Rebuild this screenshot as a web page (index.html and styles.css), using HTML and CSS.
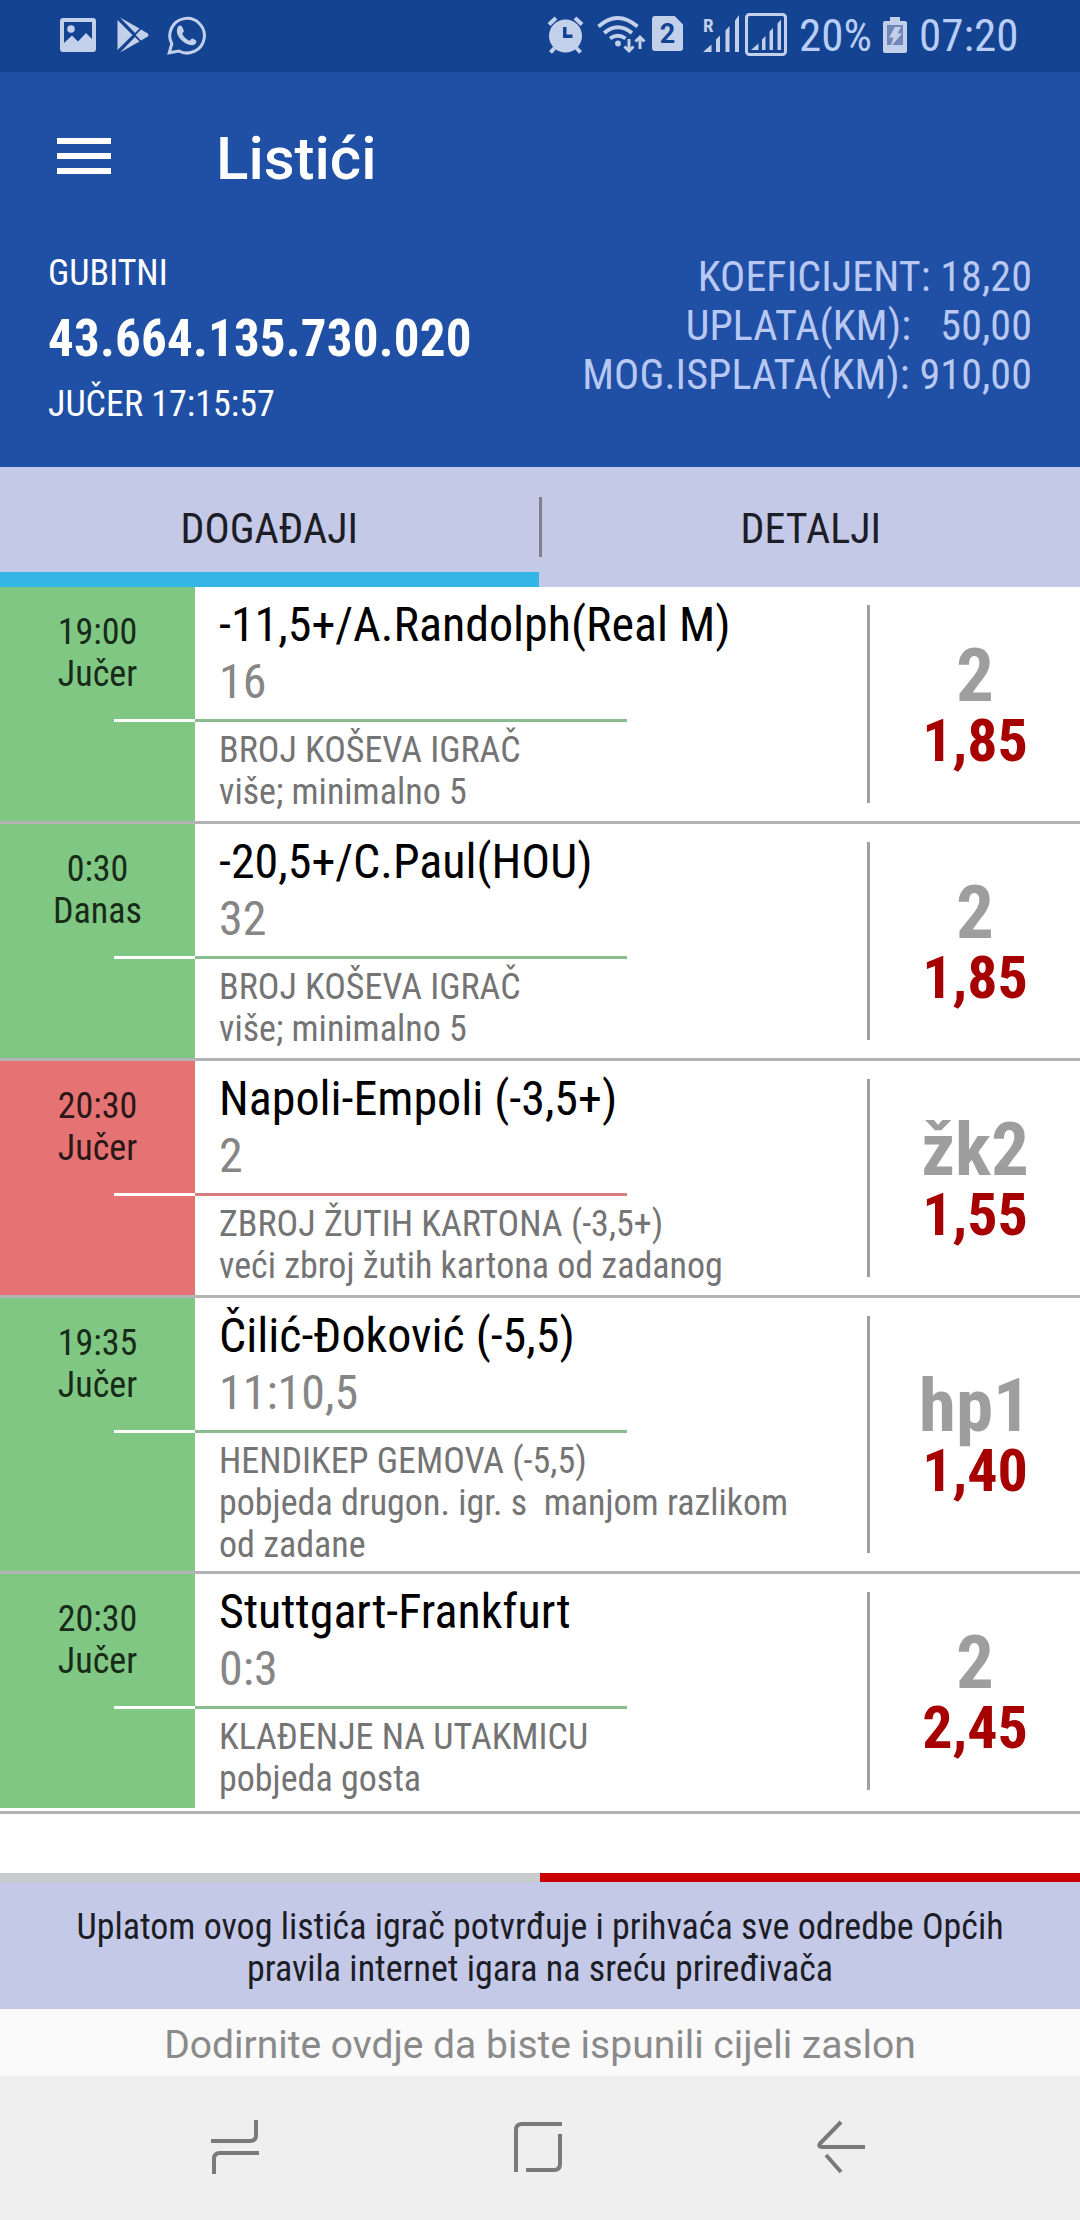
FILE: index.html
```html
<!DOCTYPE html>
<html lang="hr">
<head>
    <meta charset="UTF-8">
    <meta name="viewport" content="width=device-width, initial-scale=1.0">
    <title>Listići</title>
    <link rel="stylesheet" href="styles.css">
</head>
<body>
    <div class="status-bar">
        <svg class="icon-image" width="36" height="34" viewBox="0 0 36 34">
            <path fill-rule="evenodd" d="M3 0h30a3 3 0 0 1 3 3v28a3 3 0 0 1-3 3H3a3 3 0 0 1-3-3V3a3 3 0 0 1 3-3zM4 4v21l8-7.500 6 6 8-8.500 6 6V4z"/>
            <circle cx="11" cy="11" r="3.800"/>
        </svg>
        <svg class="icon-play" width="32" height="36" viewBox="0 0 32 36">
            <path d="M.5 3v30L15.500 18zM3 .5l19.500 11-4.500 4.500zM3 35.500l19.500-11-4.500-4.500zM24 12.500l6.500 3.700q2 1.800 0 3.600L24 23.500 18.700 18z"/>
        </svg>
        <svg class="icon-whatsapp" width="39" height="39" viewBox="0 0 39 39">
            <path class="line" stroke-width="3" d="M2.200 36.800l2.600-9A17.300 17.300 0 1 1 12 35z"/>
            <path d="M11 10.500c2-2 4-.5 4.500 1l1.300 3.300c.4 1.200-1.200 2-1.600 2.900 1.500 3.200 4 5.600 7.300 7 1-.4 1.800-2.400 3-2.200l3.300 1.700c1.200.6.6 3-.8 4-5 4-19.500-5.500-18-14.500q.3-2 1-3.200z"/>
        </svg>
        <div class="status-right">
            <svg class="icon-alarm" width="37" height="38" viewBox="0 0 37 38">
                <path fill-rule="evenodd" d="M18.500 3.500a16.500 16.500 0 1 1 0 33 16.500 16.500 0 0 1 0-33zM16 11v11h9.500v-3.500H19.500V11z"/>
                <path class="line" stroke-width="4" d="M2 8.500l7-6.500M28 2l7 6.500M7.500 32l-4 4.500M29.500 32l4 4.500"/>
            </svg>
            <svg class="icon-wifi" width="50" height="38" viewBox="0 0 50 38">
                <path class="line" stroke-width="3.800" d="M1.500 10.500Q20.500-6.500 40.500 10.500M7.200 17Q20.500 5.500 35 17M13 22.500q8-5.500 15.500 0"/>
                <circle cx="21" cy="27.500" r="2.900"/>
                <path class="line" stroke-width="3" d="M32 23v12M27.500 30.500l4.500 4.500 4.500-4.500M43 33V21M38.500 25.500l4.500-4.500 4.500 4.500"/>
            </svg>
            <div class="sim">2</div>
            <svg class="icon-signal" width="37" height="38" viewBox="0 0 37 38">
                <path d="M0 37l8.500-7.500V37zM13 37V24.500l4-4V37zM22.500 37V15.500l4-4.500v26zM32 37V5.500L36 0v37z"/>
                <text x="0" y="17">R</text>
            </svg>
            <svg class="icon-signal-box" width="42" height="43" viewBox="0 0 42 43">
                <rect class="line" stroke-width="3" x="1.500" y="1.500" width="39" height="40" rx="3"/>
                <path d="M6 37l7.500-6.500V37zM17 37V26.500l3.500-3.500v14zM24.500 37V18.500l3.500-3.500v22zM32.500 37V10.500L36 6.500V37z"/>
            </svg>
            <span class="battery-level">20%</span>
            <svg class="icon-battery" width="24" height="37" viewBox="0 0 24 37">
                <path d="M7 0h10v4H22q2 0 2 2v28q0 2-2 2H2q-2 0-2-2V6q0-2 2-2H7z"/>
                <path class="battery-hole" d="M4 8h16v20H4z"/>
                <path d="M12 10h6l-3.500 6.500H19L7.500 30l3-9.500H6z"/>
            </svg>
            <span class="clock">07:20</span>
        </div>
    </div>

    <header>
        <div class="toolbar">
            <div class="menu-btn"><span></span><span></span><span></span></div>
            <h1>Listići</h1>
        </div>
        <div class="ticket">
            <div class="ticket-info">
                <div>GUBITNI</div>
                <div class="ticket-number">43.664.135.730.020</div>
                <div>JUČER 17:15:57</div>
            </div>
            <div class="ticket-totals">
                <div>KOEFICIJENT: 18,20</div>
                <div>UPLATA(KM): &nbsp; 50,00</div>
                <div>MOG.ISPLATA(KM): 910,00</div>
            </div>
        </div>
    </header>

    <nav class="tabs">
        <div class="tab active">DOGAĐAJI</div>
        <div class="tab-divider"></div>
        <div class="tab">DETALJI</div>
    </nav>

    <main>
        <div class="event won">
            <div class="event-time">19:00<br>Jučer</div>
            <div class="event-body">
                <div class="event-name">-11,5+/A.Randolph(Real M)</div>
                <div class="event-result">16</div>
                <div class="event-line"></div>
                <div class="event-desc">BROJ KOŠEVA IGRAČ<br>više; minimalno 5</div>
            </div>
            <div class="event-odds">
                <div class="pick">2</div>
                <div class="odd">1,85</div>
            </div>
        </div>
        <div class="event won">
            <div class="event-time">0:30<br>Danas</div>
            <div class="event-body">
                <div class="event-name">-20,5+/C.Paul(HOU)</div>
                <div class="event-result">32</div>
                <div class="event-line"></div>
                <div class="event-desc">BROJ KOŠEVA IGRAČ<br>više; minimalno 5</div>
            </div>
            <div class="event-odds">
                <div class="pick">2</div>
                <div class="odd">1,85</div>
            </div>
        </div>
        <div class="event lost">
            <div class="event-time">20:30<br>Jučer</div>
            <div class="event-body">
                <div class="event-name">Napoli-Empoli (-3,5+)</div>
                <div class="event-result">2</div>
                <div class="event-line"></div>
                <div class="event-desc">ZBROJ ŽUTIH KARTONA (-3,5+)<br>veći zbroj žutih kartona od zadanog</div>
            </div>
            <div class="event-odds">
                <div class="pick">žk2</div>
                <div class="odd">1,55</div>
            </div>
        </div>
        <div class="event won">
            <div class="event-time">19:35<br>Jučer</div>
            <div class="event-body">
                <div class="event-name">Čilić-Đoković (-5,5)</div>
                <div class="event-result">11:10,5</div>
                <div class="event-line"></div>
                <div class="event-desc">HENDIKEP GEMOVA (-5,5)<br>pobjeda drugon. igr. s &nbsp;manjom razlikom<br>od zadane</div>
            </div>
            <div class="event-odds">
                <div class="pick">hp1</div>
                <div class="odd">1,40</div>
            </div>
        </div>
        <div class="event won">
            <div class="event-time">20:30<br>Jučer</div>
            <div class="event-body">
                <div class="event-name">Stuttgart-Frankfurt</div>
                <div class="event-result">0:3</div>
                <div class="event-line"></div>
                <div class="event-desc">KLAĐENJE NA UTAKMICU<br>pobjeda gosta</div>
            </div>
            <div class="event-odds">
                <div class="pick">2</div>
                <div class="odd">2,45</div>
            </div>
        </div>
    </main>

    <div class="pager"><span></span><span class="current"></span></div>
    <footer>Uplatom ovog listića igrač potvrđuje i prihvaća sve odredbe Općih<br>pravila internet igara na sreću priređivača</footer>
    <div class="fullscreen-hint">Dodirnite ovdje da biste ispunili cijeli zaslon</div>

    <div class="nav-bar">
        <svg width="48" height="54" viewBox="0 0 48 54">
            <path d="M45 0v15q0 6-6 6H0M48 33H9q-6 0-6 6v15"/>
        </svg>
        <svg width="48" height="54" viewBox="0 0 48 54">
            <path d="M48 4H8q-6 0-6 6v42M46 14v30q0 6-6 6H12"/>
        </svg>
        <svg width="48" height="54" viewBox="0 0 48 54">
            <path d="M24 2L3 23.500q-2 3.500 2 3.500H48M9 35l15 17"/>
        </svg>
    </div>
</body>
</html>
```

FILE: styles.css
```css
:root {
    --primary: #1f50a5;
    --primary-dark: #144391;
    --lavender: #c5c9e8;
    --status: #c3d0ea;
    --won: #81c784;
    --won-line: #8bbc8d;
    --lost: #e57373;
    --lost-line: #d87e7e;
    --line: #b3b3b3;
}
* { box-sizing: border-box; }
body {
    margin: 0;
    width: 1080px;
    height: 2220px;
    display: flex;
    flex-direction: column;
    background: #fff;
    font-family: 'Roboto Condensed', Roboto, sans-serif;
    font-size: 36px;
    line-height: 42px;
}

/* status bar */
.status-bar {
    display: flex;
    align-items: flex-start;
    height: 72px;
    padding-left: 60px;
    background: var(--primary-dark);
    color: #b9cdf7;
}
.status-bar svg {
    flex: none;
    fill: var(--status);
}
.status-bar .line {
    fill: none;
    stroke: var(--status);
}
.icon-image { margin-top: 18px; }
.icon-play {
    margin-top: 17px;
    margin-left: 21px;
}
.icon-whatsapp {
    margin-top: 16px;
    margin-left: 18px;
}
.status-right {
    display: flex;
    align-items: flex-start;
    margin-left: auto;
    width: 533px;
    font-size: 45px;
    line-height: 72px;
}
.icon-alarm { margin-top: 16px; }
.icon-wifi {
    margin-top: 16px;
    margin-left: 13px;
}
.sim {
    width: 31px;
    height: 35px;
    margin: 16px 20px 0 5px;
    background: var(--status);
    border-radius: 3px;
    clip-path: polygon(0 0, 73% 0, 100% 24%, 100% 100%, 0 100%);
    color: var(--primary-dark);
    font: bold 27px/37px Roboto, sans-serif;
    text-align: center;
}
.icon-signal { margin-top: 15px; }
.icon-signal text {
    font: bold 19px 'Roboto Condensed', sans-serif;
}
.icon-signal-box {
    margin-top: 13px;
    margin-left: 5px;
}
.battery-level {
    width: 96px;
    padding-left: 12px;
}
.icon-battery { margin-top: 17px; }
.battery-hole { fill: #7288bb; }
.clock { padding-left: 12px; }

/* header */
header {
    height: 395px;
    background: var(--primary);
    color: #fff;
}
.toolbar {
    display: flex;
    align-items: center;
    height: 168px;
    padding-left: 57px;
}
.menu-btn {
    display: flex;
    flex-direction: column;
    gap: 9px;
    width: 54px;
    margin-right: 105px;
}
.menu-btn span {
    height: 6px;
    background: #fff;
}
h1 {
    margin: 5px 0 0;
    font: 500 60px/70px Roboto, sans-serif;
}
.ticket {
    display: flex;
    justify-content: space-between;
    padding: 12px 48px 0 48px;
}
.ticket-info {
    display: flex;
    flex-direction: column;
    gap: 14px;
}
.ticket-number {
    font-size: 51px;
    font-weight: 700;
    line-height: 61px;
    letter-spacing: 0.2px;
}
.ticket-totals {
    color: #b9c8f3;
    font-size: 42px;
    line-height: 49px;
    letter-spacing: 0.1px;
    text-align: right;
}

/* tabs */
.tabs {
    display: flex;
    height: 120px;
    background: var(--lavender);
    color: #1d1d26;
    font-size: 42px;
    text-align: center;
}
.tab {
    flex: 1;
    height: 120px;
    line-height: 124px;
}
.tab.active { border-bottom: 15px solid #33b5e5; }
.tab-divider {
    width: 3px;
    height: 60px;
    margin-top: 30px;
    background: #80808c;
}

/* events */
main {
    height: 1286px;
}
.event {
    display: flex;
    min-height: 237px;
    border-bottom: 3px solid var(--line);
}
.event:last-child {
    min-height: 240px;
}
.event-time {
    width: 195px;
    padding-top: 24px;
    text-align: center;
    color: #172b18;
    background: linear-gradient(#fff, #fff) right 132px / 81px 3px no-repeat var(--won);
}
.event:last-child .event-time { margin-bottom: 3px; }
.lost .event-time {
    color: #2b1717;
    background-color: var(--lost);
}
.event-body {
    width: 672px;
    padding: 9px 0 5px;
}
.event-name, .event-result {
    padding-left: 24px;
    font-size: 48px;
    line-height: 57px;
    color: #000;
}
.event-result { color: #868686; }
.event-line {
    width: 432px;
    height: 3px;
    margin: 9px 0 7px;
    background: var(--won-line);
}
.lost .event-line { background: var(--lost-line); }
.event-desc {
    padding-left: 24px;
    color: #747474;
}
.event-odds {
    display: flex;
    flex-direction: column;
    justify-content: center;
    width: 213px;
    margin: 18px 0;
    padding-top: 13px;
    border-left: 3px solid #9e9e9e;
    text-align: center;
    font-weight: 700;
}
.event:last-child .event-odds { margin-bottom: 21px; }
.pick {
    font-size: 75px;
    line-height: 59px;
    color: #9e9e9e;
}
.odd {
    font-size: 60px;
    line-height: 71px;
    color: #a60000;
}

/* bottom */
.pager {
    display: flex;
    height: 9px;
    background: #c9cacc;
}
.pager span { flex: 1; }
.pager .current { background: #c80000; }
footer {
    height: 127px;
    padding-top: 24px;
    background: var(--lavender);
    color: #1d1d26;
    text-align: center;
}
.fullscreen-hint {
    height: 67px;
    background: #fafafa;
    color: #8a8a8a;
    font: 39px/72px Roboto, sans-serif;
    text-align: center;
}
.nav-bar {
    display: flex;
    justify-content: space-between;
    height: 144px;
    padding: 44px 215px 0 211px;
    background: #efefef;
}
.nav-bar svg {
    fill: none;
    stroke: #7a7a7a;
    stroke-width: 4;
}
```
